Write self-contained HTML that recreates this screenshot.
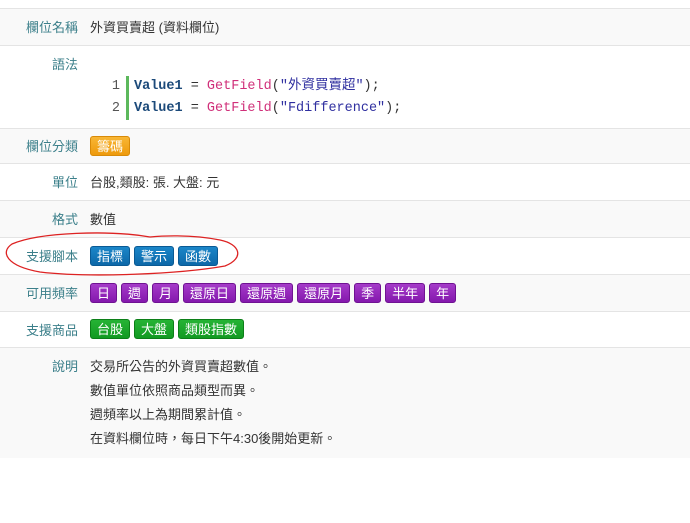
<!DOCTYPE html>
<html><head><meta charset="utf-8"><style>
body{margin:0;width:690px;height:523px;background:#fff;font-family:"Liberation Sans","Noto Sans CJK TC",sans-serif;font-size:13px;color:#333;position:relative;overflow:hidden}
.row{position:absolute;left:0;width:690px;border-top:1px solid #e4e4e4;box-sizing:border-box}
.g{background:#f9f9f9}
.lab{position:absolute;right:612px;color:#3b7f8a;white-space:nowrap}
.val{position:absolute;left:90px;white-space:nowrap}
.b{display:inline-block;height:20px;line-height:20px;padding:0 6px;border-radius:3px;color:#fff;font-size:13px;margin-right:4px;vertical-align:top;box-sizing:border-box}
.bl{background:linear-gradient(#1b86c9,#0d68a8);border:1px solid #0a5a94}
.pu{background:linear-gradient(#a53bc9,#8418ad);border:1px solid #6f1292}
.gr{background:linear-gradient(#26b335,#129a22);border:1px solid #0c7f18}
.or{background:linear-gradient(#f8b634,#ee9a0c);border:1px solid #d88a08}
.code{position:absolute;left:100px;font-family:"Liberation Mono","Noto Sans CJK TC",monospace;font-size:13.5px;line-height:22px}
.ln{display:inline-block;width:20px;text-align:right;color:#555;padding-right:6px;border-right:3px solid #5cb85c;margin-right:5px}
.k{color:#1c4a7a;font-weight:bold}.f{color:#d0307a}.s{color:#3030a0}
</style></head><body>
<div class="row g" style="top:8px;height:37px"><span class="lab" style="top:8px">欄位名稱</span><span class="val" style="top:8px">外資買賣超 (資料欄位)</span></div>
<div class="row" style="top:45px;height:83px"><span class="lab" style="top:8px">語法</span></div>
<div class="code" style="top:76px"><span class="ln">1</span><span class="k">Value1</span> = <span class="f">GetField</span>(<span class="s">"外資買賣超"</span>);<br><span class="ln">2</span><span class="k">Value1</span> = <span class="f">GetField</span>(<span class="s">"Fdifference"</span>);</div>
<div class="row g" style="top:128px;height:35px"><span class="lab" style="top:7px">欄位分類</span><span class="val" style="top:7px"><span class="b or">籌碼</span></span></div>
<div class="row" style="top:163px;height:37px"><span class="lab" style="top:8px">單位</span><span class="val" style="top:8px">台股,類股: 張. 大盤: 元</span></div>
<div class="row g" style="top:200px;height:37px"><span class="lab" style="top:8px">格式</span><span class="val" style="top:8px">數值</span></div>
<div class="row" style="top:237px;height:37px"><span class="lab" style="top:8px">支援腳本</span><span class="val" style="top:8px"><span class="b bl">指標</span><span class="b bl">警示</span><span class="b bl">函數</span></span></div>
<div class="row g" style="top:274px;height:37px"><span class="lab" style="top:8px">可用頻率</span><span class="val" style="top:8px"><span class="b pu">日</span><span class="b pu">週</span><span class="b pu">月</span><span class="b pu">還原日</span><span class="b pu">還原週</span><span class="b pu">還原月</span><span class="b pu">季</span><span class="b pu">半年</span><span class="b pu">年</span></span></div>
<div class="row" style="top:311px;height:36px"><span class="lab" style="top:8px">支援商品</span><span class="val" style="top:7px"><span class="b gr">台股</span><span class="b gr">大盤</span><span class="b gr">類股指數</span></span></div>
<div class="row g" style="top:347px;height:111px"><span class="lab" style="top:8px">說明</span><span class="val" style="top:7px;line-height:24px">交易所公告的外資買賣超數值。<br>數值單位依照商品類型而異。<br>週頻率以上為期間累計值。<br>在資料欄位時，每日下午4:30後開始更新。</span></div>
<svg style="position:absolute;left:0;top:228px" width="250" height="52"><path d="M150 9 C110 2,40 4,12 16 C0 24,6 38,40 44 C90 50,180 46,225 38 C245 30,240 16,220 12 C190 6,160 8,150 9" fill="none" stroke="#d22" stroke-width="1.3"/></svg>
</body></html>
